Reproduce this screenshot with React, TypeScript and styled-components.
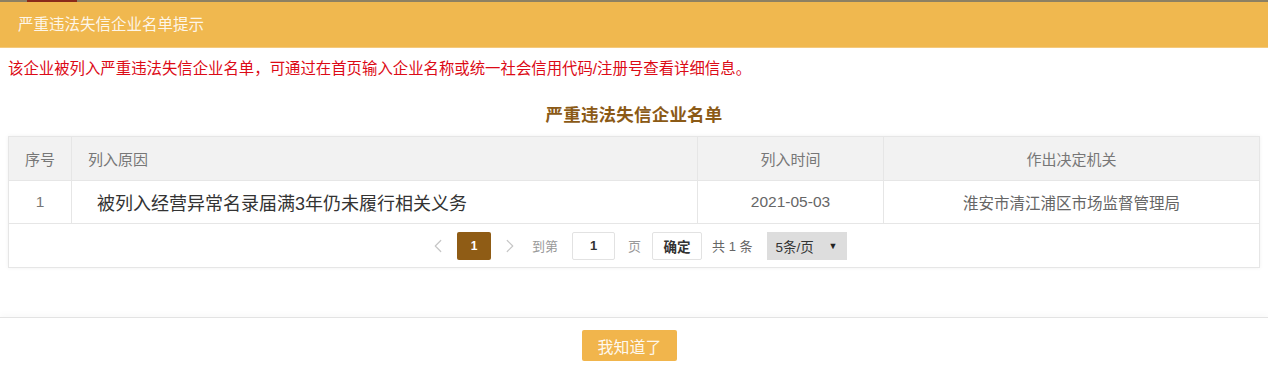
import styled, { createGlobalStyle } from "styled-components";
import { ChevronLeft, ChevronRight } from "lucide-react";

const GlobalStyle = createGlobalStyle`
  html, body {
    margin: 0;
    padding: 0;
    background: #ffffff;
  }
  body {
    font-family: "Liberation Sans", "Noto Sans CJK SC", sans-serif;
  }
`;

const Page = styled.div`
  width: 1268px;
  height: 378px;
  display: flex;
  flex-direction: column;
  background: #ffffff;
  overflow: hidden;
`;

const TopStrip = styled.div`
  height: 2px;
  background: #8d8062;
  display: flex;
`;

const StripMark = styled.div`
  width: 50px;
  margin-left: 27px;
  background: #8a2a1a;
`;

const Header = styled.div`
  height: 45px;
  line-height: 45px;
  padding-left: 18px;
  background: #f0b84f;
  border-bottom: 1px solid #f4c97c;
  color: rgba(255, 255, 255, 0.88);
  font-size: 15.5px;
`;

const Notice = styled.div`
  margin-top: 10px;
  padding-left: 8px;
  line-height: 22px;
  color: #dc0a16;
  font-size: 15.4px;
`;

const ListTitle = styled.h2`
  margin: 23px 0 0;
  text-align: center;
  line-height: 24px;
  font-size: 17.5px;
  font-weight: bold;
  color: #8b5a16;
  letter-spacing: 0.2px;
`;

const Table = styled.table`
  margin: 9px 0 0 8px;
  width: 1251px;
  border-collapse: collapse;
  table-layout: fixed;
  box-shadow: 0 0 4px rgba(0, 0, 0, 0.06);
`;

const Th = styled.th<{ $align?: string; $pad?: number }>`
  height: 43px;
  padding: 0 0 0 ${({ $pad }) => $pad ?? 0}px;
  background: #f2f2f2;
  border: 1px solid #e6e6e6;
  color: #777;
  font-size: 15px;
  font-weight: normal;
  text-align: ${({ $align }) => $align ?? "center"};
`;

const Td = styled.td<{ $align?: string; $pad?: number; $size?: number; $color?: string }>`
  height: 42px;
  padding: 0 0 0 ${({ $pad }) => $pad ?? 0}px;
  border: 1px solid #e6e6e6;
  background: #fff;
  color: ${({ $color }) => $color ?? "#666"};
  font-size: ${({ $size }) => $size ?? 15.5}px;
  text-align: ${({ $align }) => $align ?? "center"};
`;

const PagerCell = styled.td`
  height: 43px;
  padding: 0;
  border: 1px solid #e6e6e6;
`;

const Pager = styled.div`
  display: flex;
  align-items: center;
  padding-left: 418px;
  font-size: 13px;
  color: #999;
`;

const Arrow = styled.span<{ $ml?: number }>`
  display: flex;
  align-items: center;
  color: #c6c6c6;
  margin-left: ${({ $ml }) => $ml ?? 0}px;
`;

const CurrentPage = styled.span`
  width: 34px;
  height: 28px;
  margin-left: 8px;
  border-radius: 2px;
  background: #8f5c15;
  color: #fff;
  font-size: 12px;
  font-weight: bold;
  display: flex;
  align-items: center;
  justify-content: center;
`;

const Label = styled.span<{ $ml?: number; $color?: string }>`
  margin-left: ${({ $ml }) => $ml ?? 0}px;
  color: ${({ $color }) => $color ?? "#999"};
`;

const PageInput = styled.span`
  width: 41px;
  height: 26px;
  margin-left: 14px;
  border: 1px solid #e2e2e2;
  border-radius: 2px;
  color: #333;
  font-weight: bold;
  display: flex;
  align-items: center;
  justify-content: center;
`;

const ConfirmButton = styled.span`
  width: 48px;
  height: 26px;
  margin-left: 11px;
  border: 1px solid #e2e2e2;
  border-radius: 2px;
  color: #333;
  font-weight: bold;
  font-size: 13.5px;
  display: flex;
  align-items: center;
  justify-content: center;
`;

const SizeSelect = styled.span`
  width: 80px;
  height: 28px;
  margin-left: 14px;
  padding: 0 9px;
  box-sizing: border-box;
  background: #dddddd;
  color: #333;
  font-size: 13.5px;
  display: flex;
  align-items: center;
  justify-content: space-between;
`;

const Caret = styled.span`
  font-size: 9px;
  color: #222;
`;

const Footer = styled.div`
  margin-top: 49px;
  border-top: 1px solid #e3e3e3;
  box-shadow: 0 -3px 6px rgba(0, 0, 0, 0.025);
  padding: 12px 0 0 1px;
  display: flex;
  justify-content: center;
  flex: 1;
`;

const OkButton = styled.button`
  width: 95px;
  height: 31px;
  margin-right: 10px;
  border: none;
  border-radius: 2px;
  background: #f1b54c;
  color: rgba(255, 255, 255, 0.92);
  font-family: inherit;
  font-size: 16px;
  cursor: pointer;
`;

const App = () => {
  return (
    <Page>
      <GlobalStyle />
      <TopStrip>
        <StripMark />
      </TopStrip>
      <Header>严重违法失信企业名单提示</Header>
      <Notice>
        该企业被列入严重违法失信企业名单，可通过在首页输入企业名称或统一社会信用代码/注册号查看详细信息。
      </Notice>
      <ListTitle>严重违法失信企业名单</ListTitle>
      <Table>
        <colgroup>
          <col style={{ width: 63 }} />
          <col style={{ width: 626 }} />
          <col style={{ width: 186 }} />
          <col style={{ width: 376 }} />
        </colgroup>
        <thead>
          <tr>
            <Th>序号</Th>
            <Th $align="left" $pad={16}>
              列入原因
            </Th>
            <Th>列入时间</Th>
            <Th>作出决定机关</Th>
          </tr>
        </thead>
        <tbody>
          <tr>
            <Td $color="#777">1</Td>
            <Td $align="left" $pad={25} $size={18} $color="#333">
              被列入经营异常名录届满3年仍未履行相关义务
            </Td>
            <Td>2021-05-03</Td>
            <Td>淮安市清江浦区市场监督管理局</Td>
          </tr>
          <tr>
            <PagerCell colSpan={4}>
              <Pager>
                <Arrow>
                  <ChevronLeft size={22} strokeWidth={1.3} />
                </Arrow>
                <CurrentPage>1</CurrentPage>
                <Arrow $ml={8}>
                  <ChevronRight size={22} strokeWidth={1.3} />
                </Arrow>
                <Label $ml={11}>到第</Label>
                <PageInput>1</PageInput>
                <Label $ml={13}>页</Label>
                <ConfirmButton>确定</ConfirmButton>
                <Label $ml={10} $color="#666">
                  共 1 条
                </Label>
                <SizeSelect>
                  <span>5条/页</span>
                  <Caret>▼</Caret>
                </SizeSelect>
              </Pager>
            </PagerCell>
          </tr>
        </tbody>
      </Table>
      <Footer>
        <OkButton>我知道了</OkButton>
      </Footer>
    </Page>
  );
};

export default App;
